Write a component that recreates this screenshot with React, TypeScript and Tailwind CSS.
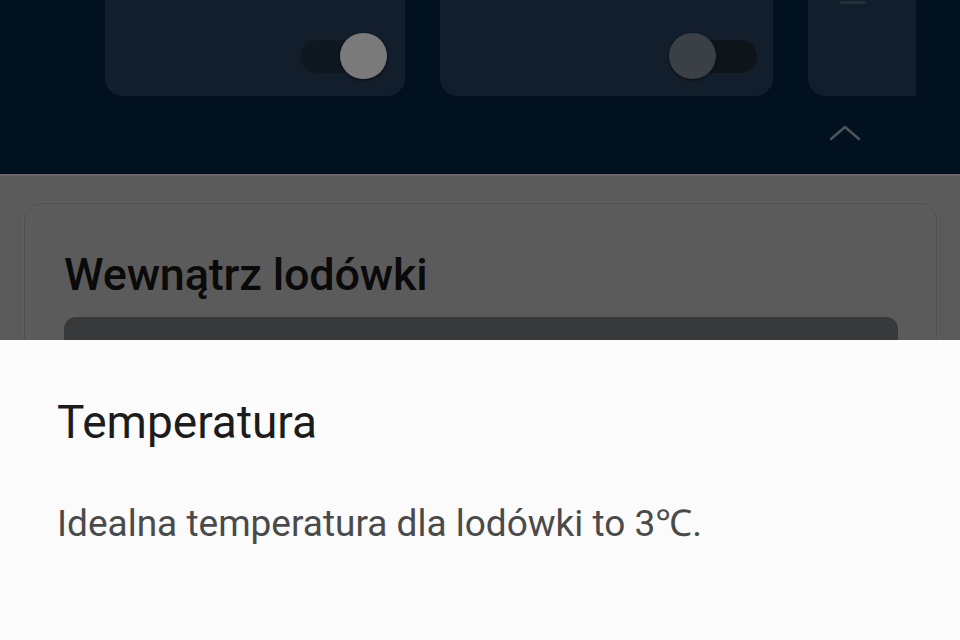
import React from "react";

export default function App() {
  return (
    <div
      className="w-[960px] h-[640px] overflow-hidden flex flex-col"
      style={{ fontFamily: "Roboto, 'Noto Sans', sans-serif" }}
    >
      {/* dimmed top section */}
      <div className="h-[174px] shrink-0 bg-[#01111f] flex flex-col">
        <div className="h-[96px] w-[916px] overflow-hidden flex gap-[35px] pl-[105px]">
          <div className="w-[300px] shrink-0 h-full bg-[#121e2b] rounded-b-[18px] flex items-start justify-end pt-[33px] pr-[18px]">
            <div className="relative w-[87px] h-[46px] flex items-center">
              <div className="w-[80px] h-[33px] rounded-full bg-[#0f1821]" />
              <div className="absolute right-0 top-0 w-[47px] h-[46px] rounded-full bg-[#7a7a7a] shadow-[0_1px_3px_rgba(0,0,0,0.6)]" />
            </div>
          </div>
          <div className="w-[333px] shrink-0 h-full bg-[#121e2b] rounded-b-[18px] flex items-start justify-end pt-[33px] pr-[16px]">
            <div className="relative w-[88px] h-[46px] flex items-center justify-end">
              <div className="w-[72px] h-[33px] rounded-full bg-[#0e1519]" />
              <div className="absolute left-0 top-0 w-[47px] h-[46px] rounded-full bg-[#3a4046] shadow-[0_1px_3px_rgba(0,0,0,0.6)]" />
            </div>
          </div>
          <div className="w-[130px] shrink-0 h-full bg-[#121e2b] rounded-bl-[18px] flex justify-center">
            <div className="w-[26px] h-[3px] mt-[1px] ml-[-40px] rounded-full bg-[#26303b]" />
          </div>
        </div>
        <div className="flex justify-end pr-[98px] pt-[28px]">
          <svg width="34" height="18" viewBox="0 0 34 18" fill="none">
            <path d="M3 15 L17 3 L31 15" stroke="#4c5258" strokeWidth="2.6" strokeLinecap="round" strokeLinejoin="round" />
          </svg>
        </div>
      </div>

      {/* dimmed content */}
      <div className="h-[166px] shrink-0 bg-[#5a5a5a] border-t-2 border-[#6a6a6a] overflow-hidden px-[24px] pt-[27px]">
        <div className="w-[913px] h-[200px] rounded-[16px] border border-[#505050] bg-[#5b5b5b] shadow-[0_0_2px_rgba(255,255,255,0.12)] pl-[39px] pr-[38px] pt-[44px]">
          <div className="text-[45px] leading-[54px] font-medium text-[#0a0a0a] tracking-[-0.2px]">
            Wewnątrz lodówki
          </div>
          <div className="mt-[15px] h-[60px] rounded-t-[12px] bg-[#38393b]" />
        </div>
      </div>

      {/* bottom sheet */}
      <div className="flex-1 bg-[#fbfbfb] pl-[57px] pt-[54px]">
        <div className="text-[46px] leading-[56px] text-[#1c1c1c]">Temperatura</div>
        <div className="mt-[52px] text-[37px] leading-[44px] text-[#4a4a4a]">
          Idealna temperatura dla lodówki to 3℃.
        </div>
      </div>
    </div>
  );
}
